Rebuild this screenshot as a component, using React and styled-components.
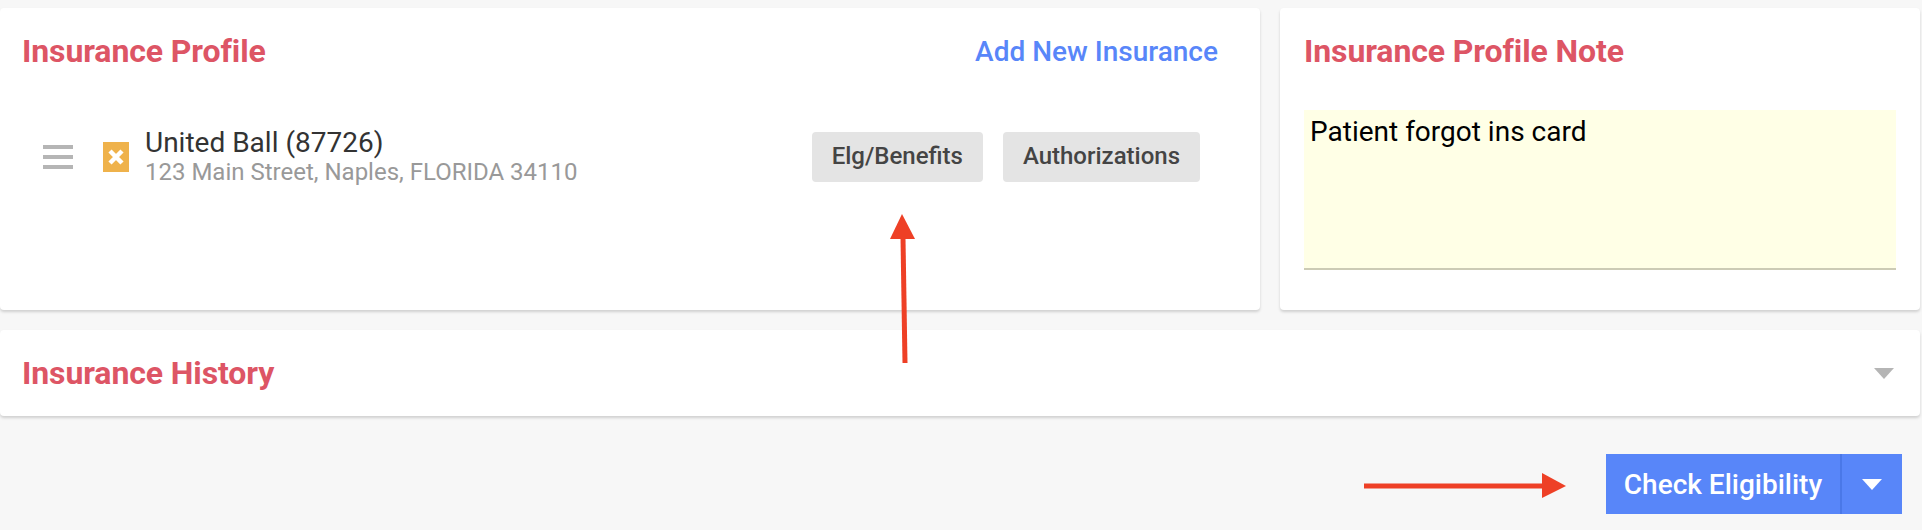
import React from 'react';
import styled, { createGlobalStyle } from 'styled-components';

const GlobalStyle = createGlobalStyle`
  html, body {
    margin: 0;
    padding: 0;
    background: #f7f7f7;
    font-family: Roboto, "Liberation Sans", sans-serif;
  }
`;

const Page = styled.div`
  position: relative;
  width: 1922px;
  height: 530px;
  overflow: hidden;
  box-sizing: border-box;
  padding: 8px 2px 0 0;
`;
const TopRow = styled.div`
  display: grid;
  grid-template-columns: 1260px 1fr;
  gap: 20px;
`;
const Card = styled.section`
  background: #fff;
  border-radius: 4px;
  box-shadow: 0 2px 3px rgba(0, 0, 0, 0.16);
  box-sizing: border-box;
  height: 302px;
  padding: 0 ${props => props.inset}px;
`;
const CardHeader = styled.div`
  display: flex;
  justify-content: space-between;
  align-items: center;
  height: 86px;
  padding-right: 20px;
`;
const Title = styled.h2`
  font-size: 32px;
  font-weight: 700;
  letter-spacing: -0.1px;
  color: #dd5565;
  margin: 0;
`;
const AddLink = styled.a`
  font-size: 28px;
  font-weight: 500;
  color: #5886f9;
  cursor: pointer;
`;
const ProfileRow = styled.div`
  display: flex;
  align-items: center;
  margin-top: 38px;
  height: 50px;
  padding-left: 21px;
  padding-right: 38px;
`;
const Handle = styled.div`
  display: flex;
  flex-direction: column;
  gap: 6px;
  width: 30px;
  margin-right: 30px;
`;
const HandleBar = styled.span`
  display: block;
  height: 4px;
  background: #b5b5b5;
`;
const StatusIcon = styled.svg`
  display: block;
  width: 26px;
  height: 30px;
  margin-right: 16px;
`;
const Info = styled.div`
  flex: 1;
  margin-top: -2px;
`;
const Name = styled.div`
  font-size: 28px;
  line-height: 32px;
  color: #333;
`;
const Address = styled.div`
  font-size: 24px;
  line-height: 26px;
  color: #999;
`;
const GreyButton = styled.button`
  height: 50px;
  padding: 0 20px 2px;
  margin-left: 20px;
  border: 0;
  border-radius: 4px;
  background: #e4e4e4;
  color: #444;
  font-family: inherit;
  font-size: 24px;
  font-weight: 500;
`;
const NoteBox = styled.div`
  margin-top: 16px;
  height: 160px;
  box-sizing: border-box;
  padding: 6px;
  background: #ffffe6;
  border-bottom: 2px solid #cccbb5;
  font-size: 28px;
  line-height: 32px;
  color: #000;
`;
const HistoryCard = styled.section`
  display: flex;
  justify-content: space-between;
  align-items: center;
  height: 86px;
  margin-top: 20px;
  padding: 0 26px 0 22px;
  background: #fff;
  border-radius: 4px;
  box-shadow: 0 2px 3px rgba(0, 0, 0, 0.16);
`;
const Caret = styled.span`
  display: block;
  width: 0;
  height: 0;
  border-left: 10px solid transparent;
  border-right: 10px solid transparent;
  border-top: 11px solid ${props => props.color};
`;
const Footer = styled.div`
  display: flex;
  justify-content: flex-end;
  margin-top: 38px;
  padding-right: 18px;
`;
const ActionGroup = styled.div`
  display: flex;
  height: 60px;
  background: #5886f9;
  color: #fff;
`;
const ActionMain = styled.button`
  width: 236px;
  border: 0;
  border-right: 2px solid #4a78e8;
  background: transparent;
  color: inherit;
  font-family: inherit;
  font-size: 28px;
  font-weight: 500;
  white-space: nowrap;
`;
const ActionToggle = styled.button`
  display: flex;
  align-items: center;
  justify-content: center;
  width: 60px;
  border: 0;
  background: transparent;
`;
const Annotation = styled.svg`
  position: absolute;
  left: 0;
  top: 0;
  pointer-events: none;
`;

const App = () => (
  <Page>
    <GlobalStyle />
    <TopRow>
      <Card inset={22}>
        <CardHeader>
          <Title>Insurance Profile</Title>
          <AddLink>Add New Insurance</AddLink>
        </CardHeader>
        <ProfileRow>
          <Handle>
            <HandleBar />
            <HandleBar />
            <HandleBar />
          </Handle>
          <StatusIcon viewBox="0 0 26 30">
            <rect width="26" height="30" fill="#efb24b" />
            <path d="M7 9 L19 21 M19 9 L7 21" stroke="#fff" strokeWidth="4.5" />
          </StatusIcon>
          <Info>
            <Name>United Ball (87726)</Name>
            <Address>123 Main Street, Naples, FLORIDA 34110</Address>
          </Info>
          <GreyButton>Elg/Benefits</GreyButton>
          <GreyButton>Authorizations</GreyButton>
        </ProfileRow>
      </Card>
      <Card inset={24}>
        <CardHeader>
          <Title>Insurance Profile Note</Title>
        </CardHeader>
        <NoteBox>Patient forgot ins card</NoteBox>
      </Card>
    </TopRow>
    <HistoryCard>
      <Title>Insurance History</Title>
      <Caret color="#b5b5b5" />
    </HistoryCard>
    <Footer>
      <ActionGroup>
        <ActionMain>Check Eligibility</ActionMain>
        <ActionToggle>
          <Caret color="#fff" />
        </ActionToggle>
      </ActionGroup>
    </Footer>
    <Annotation width="1922" height="530" viewBox="0 0 1922 530">
      <path d="M903 238 L905 363" stroke="#ee4026" strokeWidth="5" />
      <polygon points="902,214 890,239 915,239" fill="#ee4026" />
      <path d="M1364 486 L1545 486" stroke="#ee4026" strokeWidth="5" />
      <polygon points="1566,486 1542,473 1542,498" fill="#ee4026" />
    </Annotation>
  </Page>
);

export default App;
